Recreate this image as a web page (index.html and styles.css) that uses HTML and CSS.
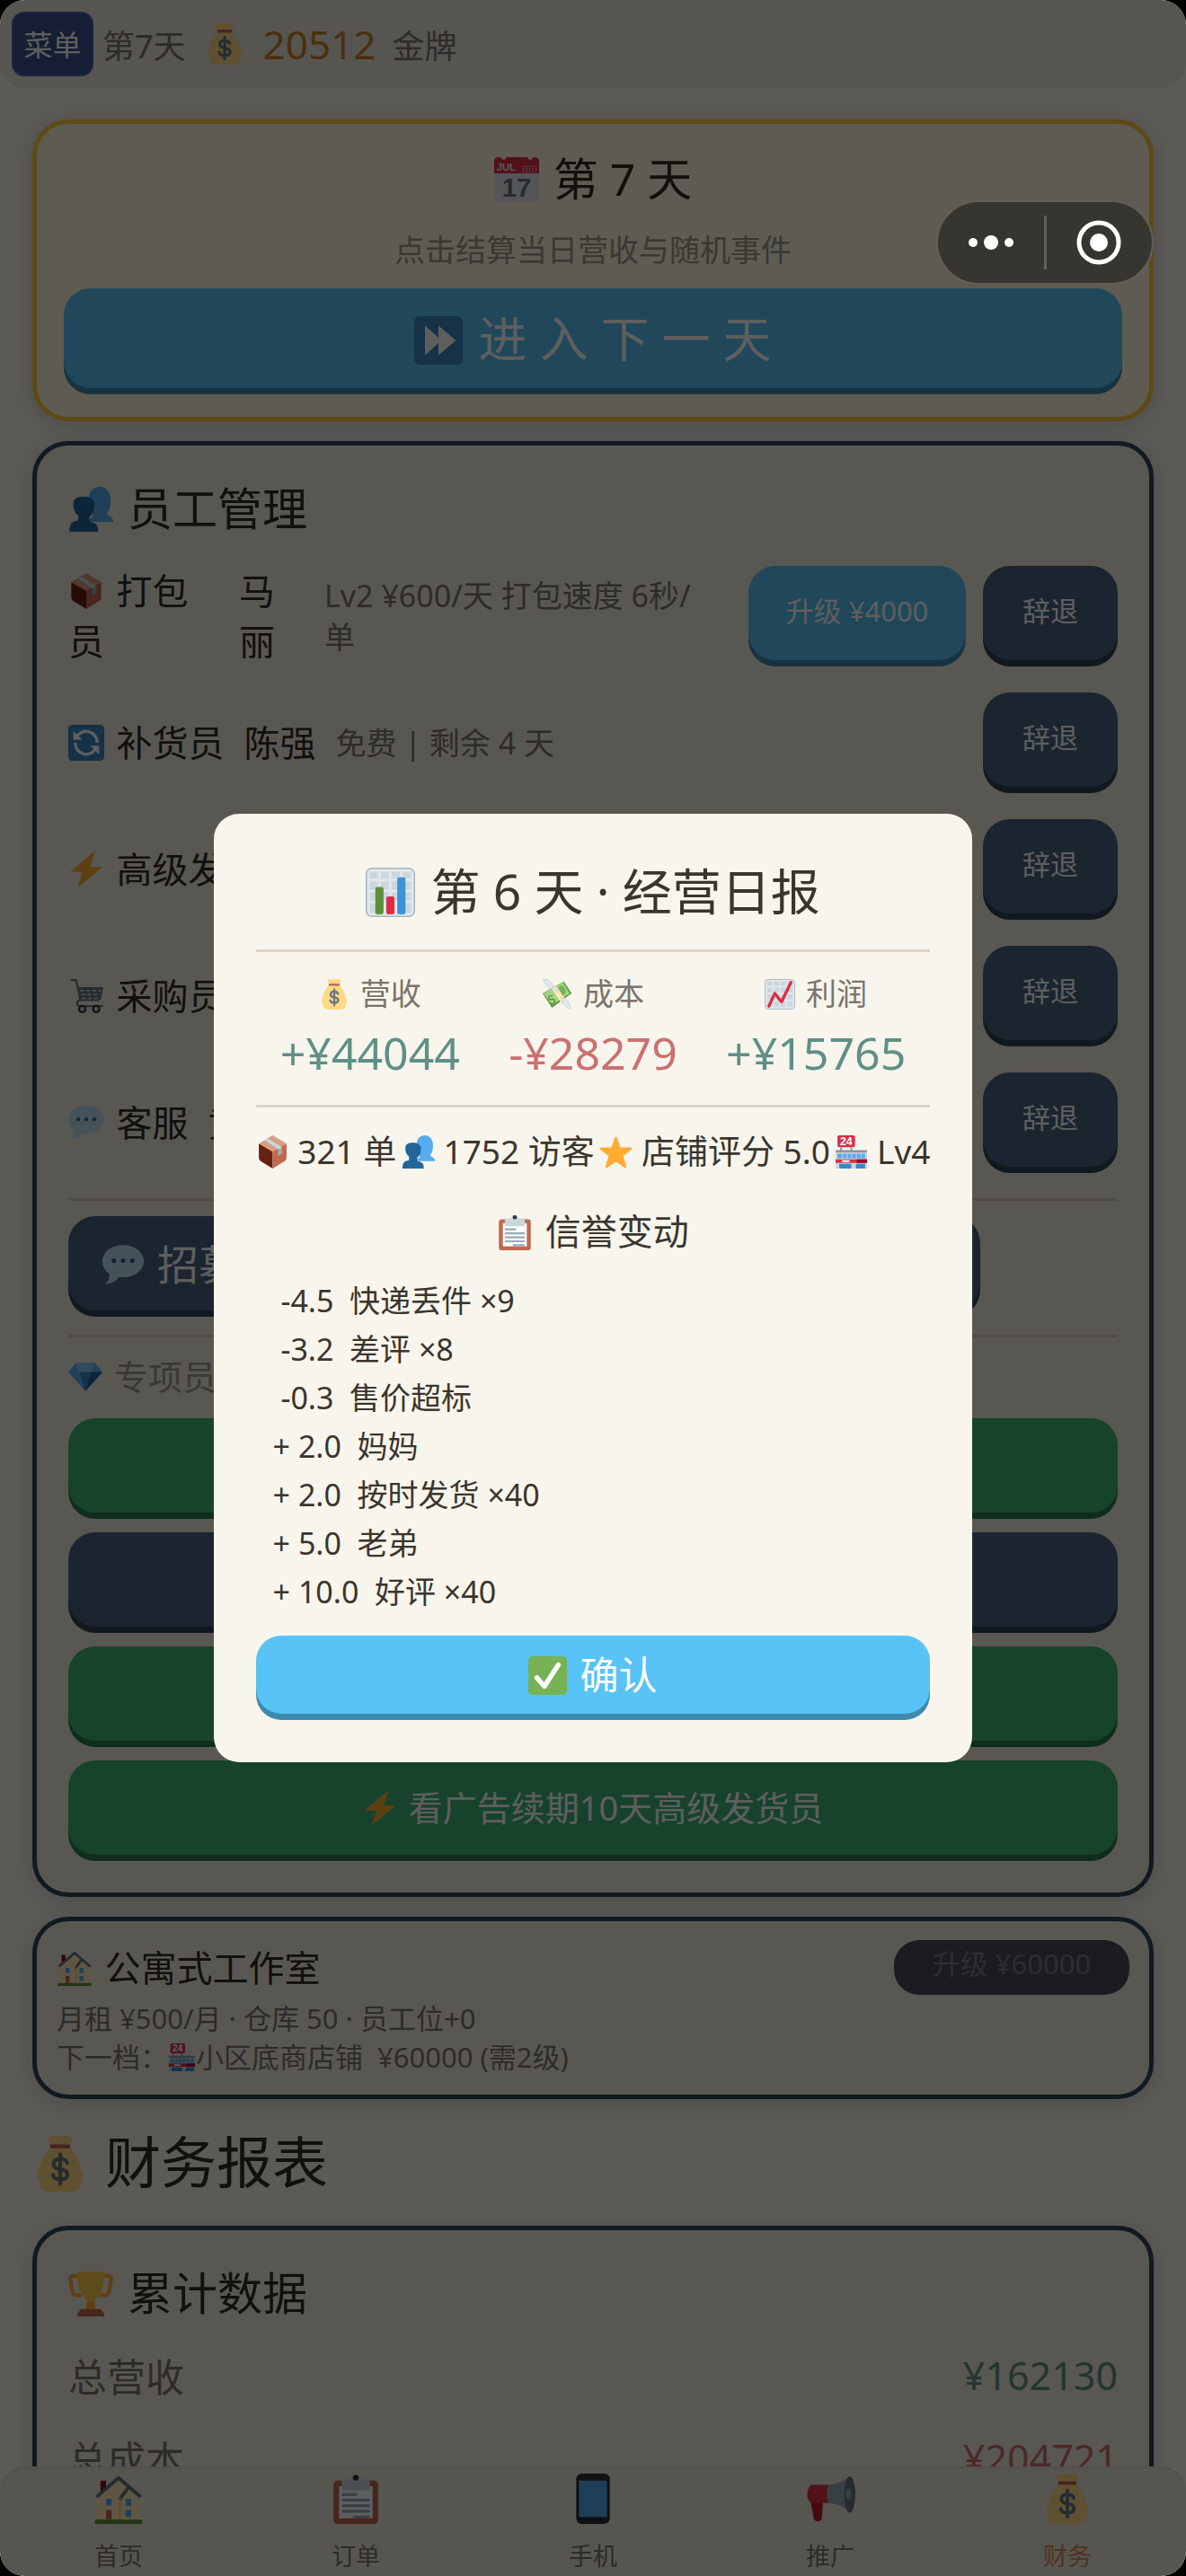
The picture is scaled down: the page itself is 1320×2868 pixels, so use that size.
FILE: index.html
```html
<!DOCTYPE html>
<html lang="zh-CN">
<head>
<meta charset="utf-8">
<meta name="viewport" content="width=device-width, initial-scale=1">
<title>经营日报</title>
<link rel="stylesheet" href="styles.css">
</head>
<body>
<svg class="sprite" aria-hidden="true">
  <symbol id="bag" viewBox="0 0 36 36">
    <path fill="#ffd983" d="M12 7 10 1.500Q10.500-.3 12.500.8 14.300-.6 16 .6 18-.6 20 .6 21.800-.6 23.500.8 25.500-.3 26 1.500L24 7C27 11 31 17 31.500 22Q34 25 32 29 32 35 26 36H10Q4 35 4.500 29 2 25 4.500 21 6 14 12 7Z"/>
    <path fill="#bf6952" d="M11.500 5.500h13v2.500h-13z"/>
    <path fill="none" stroke="#67757f" stroke-width="2.400" stroke-linecap="round" d="M18 12v19M22.500 17.500Q21.500 14.800 18 14.800 13.700 15 13.700 18.200 13.700 21 18 21.500 22.800 22.200 22.700 25 22.500 28.200 18 28.200 14 28.200 13.300 25.200"/>
  </symbol>
  <symbol id="calendar" viewBox="0 0 36 36">
    <path fill="#e0e7ec" d="M0 11h36v21a4 4 0 0 1-4 4H4a4 4 0 0 1-4-4z"/>
    <path fill="#dd2e44" d="M3 0h2.500a2 2 0 0 0 4 0H27a2 2 0 0 0 4 0h2a3 3 0 0 1 3 3v10H0V3a3 3 0 0 1 3-3z"/>
    <text x="2" y="11" font-family="Liberation Sans" font-weight="700" font-size="8" fill="#f5f8fa">JUL</text>
    <path stroke="#f5f8fa" stroke-width="1" stroke-dasharray="1 1.500" d="M23 7.500h11M23 9.500h11M23 11.500h11"/>
    <text x="18" y="32" text-anchor="middle" font-family="Liberation Sans" font-weight="700" font-size="21" fill="#66757f">17</text>
  </symbol>
  <symbol id="forward" viewBox="0 0 36 36">
    <rect width="36" height="36" rx="4" fill="#3b88c3"/>
    <path fill="#fff" d="M8 7l10 9V7l13 11-13 11v-9L8 29z"/>
  </symbol>
  <symbol id="people" viewBox="0 0 36 36">
    <path fill="#55acee" d="M16 28c2-4 3-3 4-5-3-3-4-7-4-12 0-7 4-11 9-11s9 4 9 11c0 5-1 8-3 10 0 3 5 2 5 7H20z"/>
    <path fill="#226699" d="M1 36c0-6 1-8 7-9v-4c-3-2-4-6-4-9 0-5 4-6 8-6s9 1 9 7c0 3-1 7-4 9v4c6 1 7 3 7 8z"/>
  </symbol>
  <symbol id="package" viewBox="0 0 36 36">
    <path fill="#662113" d="M3 9l15 8v19L5 28Q3 27 3 24z"/>
    <path fill="#c1694f" d="M18 17l15-8v15q0 3-2 4l-13 8z"/>
    <path fill="#d99e82" d="M18 0l15 9-15 9L3 9z"/>
    <path fill="#ccd6dd" d="M9 5l3-2 16 10v7l-4 2v-7z"/>
    <path fill="#99aab5" d="M24 15l4-2v7l-4 2z"/>
  </symbol>
  <symbol id="sync" viewBox="0 0 36 36">
    <rect width="36" height="36" rx="4" fill="#3b88c3"/>
    <path fill="none" stroke="#fff" stroke-width="3" d="M8 13a11 11 0 0 1 21 5M28 23A11 11 0 0 1 7 18"/>
    <path fill="#fff" d="M5 6v9h9zM31 30v-9h-9z"/>
  </symbol>
  <symbol id="bolt" viewBox="0 0 36 36">
    <path fill="#ffac33" stroke="#ffac33" stroke-linejoin="round" d="M26 1L3 20h12L10 35 33 16H21z"/>
  </symbol>
  <symbol id="cart" viewBox="0 0 36 36">
    <path fill="none" stroke="#66757f" stroke-width="2" stroke-linecap="round" stroke-linejoin="round" d="M3 2h5l4 20q-4 1-3 4 0 2 3 2h22"/>
    <path fill="#66757f" d="M9 9h26l-2 11q-1 3-4 3H12z"/>
    <path stroke="#ccd6dd" stroke-width="1.600" stroke-dasharray="4 2" d="M12 12.500h21M13 16.500h19M13.500 20.300h17"/>
    <circle cx="14" cy="31" r="3.200" fill="#ccd6dd" stroke="#292f33" stroke-width="2"/><circle cx="28" cy="31" r="3.200" fill="#ccd6dd" stroke="#292f33" stroke-width="2"/>
  </symbol>
  <symbol id="bubble" viewBox="0 0 36 36">
    <path fill="#bdddf4" d="M18 1C8 1 0 7 0 15c0 5 3 9 6 11 0 4-1 7-4 9 5 0 10-2 12-6h4c10 0 18-6 18-14S28 1 18 1z"/>
    <g fill="#2a6797"><circle cx="10" cy="14.500" r="2"/><circle cx="18" cy="14.500" r="2"/><circle cx="26" cy="14.500" r="2"/></g>
  </symbol>
  <symbol id="gem" viewBox="0 0 36 36">
    <path fill="#5dadec" d="M8 3h20l8 10-18 20L0 13z"/>
    <path fill="#8ccaf7" d="M8 3h20l-4 10H12z"/>
    <path fill="#3b88c3" d="M12 13h12l-6 20z"/><path fill="#226699" d="M24 13h12L18 33z"/>
  </symbol>
  <symbol id="house" viewBox="0 0 36 36">
    <path fill="#a0041e" d="M5 5h4v10H5z"/>
    <path fill="#ffe8b6" d="M3 16L18 3l11 12 4 6v13H3z"/>
    <path fill="none" stroke="#66757f" stroke-width="2.500" stroke-linecap="round" stroke-linejoin="round" d="M3 16L18 3l15 13M19 18l6-8"/>
    <path stroke="#e3c98e" d="M19 17v16"/>
    <path fill="#55acee" d="M9 18h4v5H9zM23 18h4v5h-4zM23 26h4v5h-4z"/>
    <path fill="#c1694f" d="M9 26h4v7H9z"/><rect x="1" y="33" width="34" height="3" rx="1" fill="#5c913b"/>
  </symbol>
  <symbol id="store" viewBox="0 0 36 36">
    <rect x="3" width="19" height="13" rx="2" fill="#dd2e44"/>
    <text x="12.500" y="11" text-anchor="middle" font-family="Liberation Sans" font-weight="700" font-size="12" fill="#fff">24</text>
    <path fill="#8899a6" d="M6 13h2v4H6zM17 13h2v4h-2zM1 16h34v3H1z"/>
    <path fill="#ccd6dd" d="M1 19h34v17H1z"/>
    <path fill="#55acee" d="M3 20h30v5H3z"/><path stroke="#ccd6dd" d="M8.500 19v6M13.500 19v6M18.500 19v6M23.500 19v6M28.500 19v6"/>
    <path fill="#dd2e44" d="M1 26h34v4H1z"/><path fill="#a0041e" d="M24 26h11v4H24z"/><path fill="#fff" d="M8 27h8v2H8z"/>
    <path fill="#3b88c3" d="M5 31h13v5H5zM23 31h10v5H23z"/>
  </symbol>
  <symbol id="trophy" viewBox="0 0 36 36">
    <path fill="none" stroke="#ffac33" stroke-width="3" stroke-linejoin="round" d="M9 3.500H4Q1.500 3.500 1.700 6L3 15q.5 4 4 4h4M27 3.500h5q2.500 0 2.300 2.500L33 15q-.5 4-4 4h-4"/>
    <path fill="#ffcc4d" d="M9 0h18q2 0 2 2 0 15-9 22h-4Q7 17 7 2q0-2 2-2z"/>
    <path fill="#ffac33" d="M15 24h6l1 6h-8z"/><path fill="#c1694f" d="M11 30h14q2 0 2 2 2 1 2 4H7q0-3 2-4 0-2 2-2z"/>
  </symbol>
  <symbol id="clipboard" viewBox="0 0 36 36">
    <rect x="2" y="5" width="32" height="31" rx="3" fill="#c1694f"/>
    <path fill="#fff" d="M6 9h24v23H6z"/>
    <path fill="#ccd6dd" d="M8 4h6l2-3h4l2 3h6v6q0 2-2 2H10q-2 0-2-2z"/><circle cx="18" cy="3" r="2" fill="#292f33"/>
    <path stroke="#99aab5" stroke-width="2" d="M8 15h11M8 19h20M8 23h20M8 27h20M16 31h12"/>
  </symbol>
  <symbol id="phone" viewBox="0 0 36 36">
    <rect x="6" width="24" height="36" rx="4" fill="#292f33"/><path fill="#55acee" d="M8 5h20v26H8z"/>
  </symbol>
  <symbol id="megaphone" viewBox="0 0 36 36">
    <path fill="#be1931" d="M4 20h9l-1 12q-1 3-4 2-2-1-2-3z"/>
    <path fill="#dd2e44" d="M4 8h17v13H4q-5-6 0-13z"/>
    <path fill="#99aab5" d="M17 8q10-1 15-6v26q-5-6-15-7-3-6 0-13z"/>
    <ellipse cx="32" cy="15" rx="4" ry="13" fill="#66757f"/><ellipse cx="31" cy="15" rx="2" ry="4" fill="#99aab5"/>
  </symbol>
  <symbol id="bars" viewBox="0 0 36 36">
    <rect x=".5" y=".5" width="35" height="35" rx="4" fill="#e1e8ed" stroke="#a9b5bd"/>
    <path fill="#ccd6dd" d="M3 3h6v5H3zM11 3h6v5h-6zM19 3h6v5h-6zM27 3h6v5h-6zM3 10h6v6H3zM11 10h6v6h-6zM19 10h6v6h-6zM27 10h6v6h-6zM3 18h6v6H3zM11 18h6v6h-6zM19 18h6v6h-6zM27 18h6v6h-6zM3 26h6v7H3zM27 26h6v7h-6z"/>
    <rect x="7" y="14" width="6" height="20" rx="1.500" fill="#5c913b"/><rect x="15" y="21" width="6" height="13" rx="1.500" fill="#dd2e44"/><rect x="23" y="7" width="6" height="27" rx="1.500" fill="#3b94d9"/>
  </symbol>
  <symbol id="rising" viewBox="0 0 36 36">
    <rect x=".5" y=".5" width="35" height="35" rx="4" fill="#e1e8ed" stroke="#a9b5bd"/>
    <path fill="#ccd6dd" d="M3 3h6v5H3zM11 3h6v5h-6zM19 3h6v5h-6zM27 3h6v5h-6zM3 10h6v6H3zM11 10h6v6h-6zM19 10h6v6h-6zM27 10h6v6h-6zM3 18h6v6H3zM11 18h6v6h-6zM19 18h6v6h-6zM27 18h6v6h-6zM3 26h6v7H3zM11 26h6v7h-6zM19 26h6v7h-6zM27 26h6v7h-6z"/>
    <path fill="none" stroke="#dd2e44" stroke-width="3.500" stroke-linecap="round" stroke-linejoin="round" d="M5 32l7-15 8 10L31 4"/>
  </symbol>
  <symbol id="wings" viewBox="0 0 36 36">
    <path fill="#5c913b" d="M1 17L26 3l9 14L12 34z"/>
    <path fill="#a6d388" d="M2 17L25 4l8 13-21 14z"/>
    <ellipse cx="23" cy="14" rx="5" ry="6" fill="#77b255"/>
    <path fill="none" stroke="#5c913b" stroke-width="1.500" d="M13 20q-5-1-5 2t4 2 3 3-5 1"/>
    <path fill="#ffe8b6" d="M12 12l5-4 12 18-5 4z"/>
    <path fill="#e1e8ed" stroke="#b8c5ce" stroke-width=".6" d="M2 0q9 0 12 10l-2 2Q3 8 2 0zM23 22q9 0 11 13-5 0-10-8zM12 10l4-2 3 8z"/>
  </symbol>
  <symbol id="star" viewBox="0 0 36 36">
    <path fill="#ffac33" stroke="#ffac33" stroke-width="2.500" stroke-linejoin="round" d="M18 3l4 11.500h12l-9.500 7.500 3.500 12-10-7-10 7 3.500-12L2 14.500h12z"/>
  </symbol>
  <symbol id="check" viewBox="0 0 36 36">
    <rect width="36" height="36" rx="4" fill="#77b255"/>
    <path fill="none" stroke="#fff" stroke-width="4.500" stroke-linecap="round" stroke-linejoin="round" d="M8 20l7 8L28 8"/>
  </symbol>
</svg>

<div class="app">
  <header class="topbar">
    <button class="menu-btn" type="button">菜单</button>
    <span class="day">第7天</span>
    <svg class="icon icon--bag"><use href="#bag"/></svg>
    <span class="money">20512</span>
    <span class="rank">金牌</span>
  </header>

  <main class="content">
    <section class="card card--day">
      <h2 class="card-title"><svg class="icon"><use href="#calendar"/></svg> 第 7 天</h2>
      <p class="hint">点击结算当日营收与随机事件</p>
      <button class="btn btn--blue btn--next" type="button"><svg class="icon"><use href="#forward"/></svg> 进 入 下 一 天</button>
    </section>

    <section class="card card--staff">
      <h2 class="card-title"><svg class="icon"><use href="#people"/></svg> 员工管理</h2>
      <ul class="staff">
        <li class="staff-row staff-row--narrow">
          <span class="role"><svg class="icon"><use href="#package"/></svg> 打包员</span>
          <span class="name">马丽</span>
          <span class="desc">Lv2 ¥600/天 打包速度 6秒/单</span>
          <span class="actions"><button class="btn btn--blue btn--upgrade" type="button">升级 ¥4000</button><button class="btn btn--navy btn--small" type="button">辞退</button></span>
        </li>
        <li class="staff-row">
          <span class="role"><svg class="icon"><use href="#sync"/></svg> 补货员</span>
          <span class="name">陈强</span>
          <span class="desc">免费 | 剩余 4 天</span>
          <span class="actions"><button class="btn btn--navy btn--small" type="button">辞退</button></span>
        </li>
        <li class="staff-row">
          <span class="role"><svg class="icon"><use href="#bolt"/></svg> 高级发货员</span>
          <span class="actions"><button class="btn btn--navy btn--small" type="button">辞退</button></span>
        </li>
        <li class="staff-row">
          <span class="role"><svg class="icon"><use href="#cart"/></svg> 采购员</span>
          <span class="actions"><button class="btn btn--navy btn--small" type="button">辞退</button></span>
        </li>
        <li class="staff-row">
          <span class="role"><svg class="icon"><use href="#bubble"/></svg> 客服</span>
          <span class="name">黄</span>
          <span class="actions"><button class="btn btn--navy btn--small" type="button">辞退</button></span>
        </li>
      </ul>
      <hr class="rule rule--staff">
      <div class="recruit">
        <button class="btn btn--navy" type="button"><svg class="icon"><use href="#bubble"/></svg> 招募</button>
      </div>
      <hr class="rule rule--recruit">
      <p class="special-label"><svg class="icon"><use href="#gem"/></svg> 专项员</p>
      <div class="special">
        <button class="btn btn--green" type="button" aria-label="专项员工一"></button>
        <button class="btn btn--navy" type="button" aria-label="专项员工二"></button>
        <button class="btn btn--green" type="button" aria-label="专项员工三"></button>
        <button class="btn btn--green" type="button"><svg class="icon"><use href="#bolt"/></svg> 看广告续期10天高级发货员</button>
      </div>
    </section>

    <section class="card card--office">
      <div class="office-head">
        <h3 class="office-title"><svg class="icon"><use href="#house"/></svg> 公寓式工作室</h3>
        <button class="pill" type="button" disabled>升级 ¥60000</button>
      </div>
      <p class="office-line">月租 ¥500/月 · 仓库 50 · 员工位+0</p>
      <p class="office-line">下一档：<svg class="icon"><use href="#store"/></svg>小区底商店铺 &nbsp;¥60000 (需2级)</p>
    </section>

    <h1 class="page-title"><svg class="icon"><use href="#bag"/></svg> 财务报表</h1>

    <section class="card card--totals">
      <h2 class="card-title"><svg class="icon"><use href="#trophy"/></svg> 累计数据</h2>
      <dl class="totals">
        <div class="total"><dt>总营收</dt><dd class="gain">¥162130</dd></div>
        <div class="total"><dt>总成本</dt><dd class="loss">¥204721</dd></div>
      </dl>
    </section>
  </main>

  <nav class="tabbar">
    <a class="tab" href="#home"><svg class="icon"><use href="#house"/></svg><span>首页</span></a>
    <a class="tab" href="#orders"><svg class="icon"><use href="#clipboard"/></svg><span>订单</span></a>
    <a class="tab" href="#mobile"><svg class="icon"><use href="#phone"/></svg><span>手机</span></a>
    <a class="tab" href="#promo"><svg class="icon"><use href="#megaphone"/></svg><span>推广</span></a>
    <a class="tab tab--active" href="#finance"><svg class="icon"><use href="#bag"/></svg><span>财务</span></a>
  </nav>

  <div class="overlay">
    <section class="modal" role="dialog" aria-modal="true" aria-labelledby="report-title">
      <h2 class="modal-title" id="report-title"><svg class="icon"><use href="#bars"/></svg> 第 6 天 · 经营日报</h2>
      <hr class="rule">
      <dl class="figures">
        <div><dt><svg class="icon"><use href="#bag"/></svg> 营收</dt><dd class="gain">+¥44044</dd></div>
        <div><dt><svg class="icon"><use href="#wings"/></svg> 成本</dt><dd class="loss">-¥28279</dd></div>
        <div><dt><svg class="icon"><use href="#rising"/></svg> 利润</dt><dd class="gain">+¥15765</dd></div>
      </dl>
      <hr class="rule">
      <div class="stats">
        <span><svg class="icon"><use href="#package"/></svg> 321 单</span>
        <span><svg class="icon"><use href="#people"/></svg> 1752 访客</span>
        <span><svg class="icon"><use href="#star"/></svg> 店铺评分 5.0</span>
        <span><svg class="icon"><use href="#store"/></svg> Lv4</span>
      </div>
      <h3 class="changes-title"><svg class="icon"><use href="#clipboard"/></svg> 信誉变动</h3>
      <ul class="changes">
        <li> -4.5  快递丢件 ×9</li>
        <li> -3.2  差评 ×8</li>
        <li> -0.3  售价超标</li>
        <li>+ 2.0  妈妈</li>
        <li>+ 2.0  按时发货 ×40</li>
        <li>+ 5.0  老弟</li>
        <li>+ 10.0  好评 ×40</li>
      </ul>
      <button class="confirm" type="button"><svg class="icon"><use href="#check"/></svg> 确认</button>
    </section>
  </div>

  <div class="capsule">
    <button type="button" aria-label="更多"><svg viewBox="0 0 60 60"><circle cx="10" cy="30" r="5"/><circle cx="30" cy="30" r="8"/><circle cx="50" cy="30" r="5"/></svg></button>
    <button type="button" aria-label="关闭"><svg viewBox="0 0 60 60"><circle class="ring" cx="30" cy="30" r="22"/><circle cx="30" cy="30" r="10"/></svg></button>
  </div>
</div>
</body>
</html>
```
FILE: styles.css
```css
* { box-sizing: border-box; }

html { background: #000; }

body {
  margin: 0;
  font-family: "Noto Sans", "Noto Sans CJK SC", sans-serif;
  color: #302c24;
}

h1, h2, h3, p, ul, dl, dd { margin: 0; padding: 0; font-weight: 400; }
ul { list-style: none; }
button { border: 0; padding: 0; font: inherit; color: inherit; }

.sprite { display: none; }

.icon {
  width: 1em;
  height: 1em;
  margin-right: 3px;
  vertical-align: -0.14em;
  flex: none;
}

.app {
  display: flex;
  flex-direction: column;
  height: 100vh;
  overflow: hidden;
  border-radius: 28px;
  background: #f7f3ea;
}

/* Top bar */
.topbar {
  display: flex;
  align-items: center;
  gap: 10px;
  height: 98px;
  padding: 0 13px;
  border-radius: 28px;
  background: #e9e6da;
  color: #7a766d;
  font-size: 36px;
  flex: none;
}
.menu-btn {
  width: 91px;
  height: 72px;
  padding-bottom: 2px;
  border: 2px solid #495fb5;
  border-radius: 14px;
  background: #3b518a;
  color: #fff;
  font-size: 32px;
}
.icon--bag { width: 46px; height: 46px; margin: 0 10px; }
.money { color: #c8822f; font-size: 44px; margin-right: 8px; }

/* Scrolling content */
.content {
  flex: 1;
  min-height: 0;
  overflow-y: auto;
  scrollbar-width: none;
  padding: 35px 36px 0;
}
.card {
  border: 5px solid #2e4659;
  border-radius: 40px;
  background: #f1ecdf;
  box-shadow: 0 4px 24px rgba(0, 0, 0, .15);
  margin-bottom: 22px;
}
.card-title { font-size: 50px; line-height: 60px; }

.card--day {
  border-color: #ffc837;
  background: #fff6df;
  padding: 31px 30px 32px;
  text-align: center;
}
.hint { margin: 27px 0 21px; color: #9b978b; font-size: 34px; line-height: 44px; }

.btn {
  height: 105px;
  padding-bottom: 4px;
  border-radius: 30px;
  color: #fff;
}
.btn--blue { background: #58c3f5; box-shadow: 0 7px 0 #3f8bb0; }
.btn--navy { background: #496482; box-shadow: 0 7px 0 #2e4656; }
.btn--green { background: #3eb57a; box-shadow: 0 7px 0 #2b7a4e; }
.btn--next { display: block; width: 100%; height: 111px; font-size: 54px; }

/* Staff */
.card--staff, .card--totals { padding: 40px 35px 42px; }
.staff { display: grid; gap: 28px; margin-top: 33px; }
.staff-row {
  display: flex;
  align-items: center;
  gap: 22px;
  min-height: 113px;
  font-size: 40px;
  line-height: 56px;
}
.desc { color: #7a766d; font-size: 34px; line-height: 46px; }
.staff-row--narrow .role { width: 168px; }
.staff-row--narrow .name { width: 73px; }
.staff-row--narrow .desc { width: 430px; }
.actions { display: flex; gap: 19px; margin: 0 0 7px auto; font-size: 31px; }
.btn--small { width: 150px; }
.btn--upgrade { width: 242px; }

.rule { height: 3px; border: 0; margin: 0; background: #dad2c5; }
.rule--staff { margin-top: 28px; }
.recruit { display: flex; margin-top: 17px; }
.recruit .btn { width: 1015px; padding-left: 38px; text-align: left; font-size: 46px; }
.rule--recruit { margin-top: 27px; }
.special-label { margin: 18px 0 22px; color: #9b978b; font-size: 38px; line-height: 50px; }
.special { display: grid; gap: 22px; font-size: 38px; }

/* Office */
.card--office { padding: 21px 22px 20px; }
.office-head { display: flex; align-items: center; justify-content: space-between; margin-bottom: 5px; }
.office-title { font-size: 40px; line-height: 52px; }
.pill {
  width: 262px;
  height: 61px;
  padding-bottom: 10px;
  border-radius: 28px;
  background: #494e5d;
  color: #787d88;
  font-size: 31px;
  line-height: 50px;
}
.office-line { color: #7a766d; font-size: 31px; line-height: 43px; }
.office-line .icon { margin: 0; }

.page-title { margin: 30px 0 31px; font-size: 62px; line-height: 80px; }

/* Totals */
.totals { margin-top: 15px; }
.total {
  display: flex;
  align-items: center;
  justify-content: space-between;
  height: 92px;
  color: #7a766d;
  font-size: 43px;
}
.gain { color: #5f9086; }
.loss { color: #cb7170; }

/* Tab bar */
.tabbar {
  display: flex;
  padding: 8px 0 4px;
  border-radius: 28px 28px 0 0;
  background: #e9e6da;
  box-shadow: inset 0 3px 0 #e2dccf;
  flex: none;
}
.tab {
  display: flex;
  flex: 1;
  flex-direction: column;
  align-items: center;
  gap: 18px;
  color: #7a766d;
  font-size: 27px;
  line-height: 36px;
  text-decoration: none;
}
.tab .icon { width: 56px; height: 56px; margin: 0; }
.tab--active { color: #da8a52; }

/* Daily report dialog */
.overlay {
  position: fixed;
  inset: 0;
  display: flex;
  align-items: center;
  justify-content: center;
  border-radius: 28px;
  background: rgba(0, 0, 0, .63);
}
.modal {
  width: 64%;
  padding: 50px 47px 54px;
  border-radius: 28px;
  background: #f8f5ed;
  color: #3a352d;
}
.modal-title { margin-bottom: 29px; font-size: 55px; line-height: 72px; text-align: center; }
.figures { display: flex; justify-content: space-around; margin: 23px 0 28px; text-align: center; }
.figures dt { margin-bottom: 13px; color: #7a746a; font-size: 34px; line-height: 46px; }
.figures dd { font-size: 50px; line-height: 60px; }
.stats {
  display: flex;
  justify-content: space-between;
  margin: 24px 0 38px;
  font-size: 37px;
  line-height: 50px;
  white-space: nowrap;
}
.stats .icon { margin: 0; }
.changes-title { margin-bottom: 24px; font-size: 40px; line-height: 52px; text-align: center; }
.changes { display: grid; padding-left: 19px; font-size: 34px; line-height: 54px; }
.changes li { height: 54px; white-space: pre; }
.confirm {
  display: block;
  width: 100%;
  height: 87px;
  margin-top: 22px;
  padding-bottom: 4px;
  border-radius: 28px;
  background: #58c3f5;
  box-shadow: 0 7px 0 #3f8bb0;
  color: #fff;
  font-size: 43px;
}

/* Floating system capsule */
.capsule {
  position: fixed;
  top: 225px;
  right: 38px;
  display: flex;
  align-items: center;
  width: 238px;
  height: 90px;
  border-radius: 45px;
  background: #373530;
  box-shadow: 0 0 0 2px #605e59;
}
.capsule button { flex: 1; height: 60px; background: none; }
.capsule button + button { border-left: 3px solid #62605c; }
.capsule svg { display: block; width: 60px; height: 60px; margin: auto; fill: #fff; }
.capsule .ring { fill: none; stroke: #fff; stroke-width: 5; }
```
